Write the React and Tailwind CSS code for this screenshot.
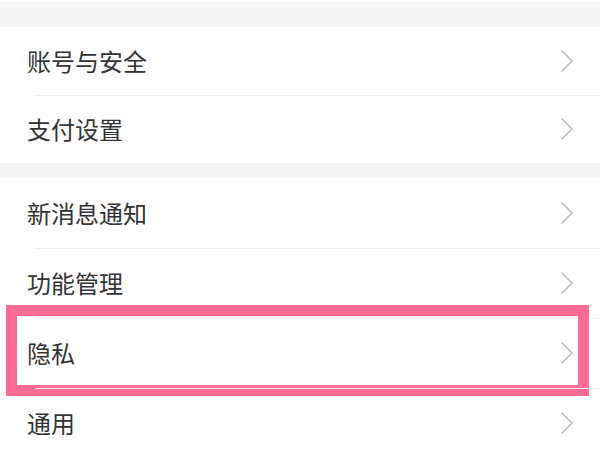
const sections = [
  ['账号与安全', '支付设置'],
  ['新消息通知', '功能管理', '隐私', '通用'],
]

function Chevron() {
  return (
    <svg width="14" height="24" viewBox="0 0 14 24" fill="none" className="shrink-0">
      <path d="M2 2 L12 12 L2 22" stroke="#bdbdbd" strokeWidth="1.6" strokeLinecap="round" strokeLinejoin="round" />
    </svg>
  )
}

function Row({ label, first, highlight, tall }) {
  return (
    <div className={`relative flex items-center pl-[27px] pr-[26px] ${tall ? 'h-[70px]' : 'h-[68px]'}`}>
      {!first ? <div className="absolute top-0 left-[35px] right-0 h-px bg-[#f0f0f0]" /> : null}
      <span className="flex-1 text-[24px] text-[#333333] leading-none">{label}</span>
      <Chevron />
      {highlight ? (
        <div className="absolute left-[6px] right-[11px] top-[-13px] bottom-[-8px] border-[11px] border-[#ff6b94] pointer-events-none" />
      ) : null}
    </div>
  )
}

export default function App() {
  return (
    <div
      className="w-[600px] h-[450px] overflow-hidden bg-white"
      style={{ fontFamily: '"Noto Sans CJK SC", "Noto Sans", sans-serif' }}
    >
      <div className="h-[2px] bg-white" />
      <div className="h-[25px] bg-[#f5f5f5]" />
      <div className="bg-white">
        {sections[0].map((l, i) => (
          <Row key={l} label={l} first={i === 0} />
        ))}
      </div>
      <div className="h-[15px] bg-[#f5f5f5]" />
      <div className="bg-white">
        {sections[1].map((l, i) => (
          <Row key={l} label={l} first={i === 0} tall highlight={l === '隐私'} />
        ))}
      </div>
    </div>
  )
}
